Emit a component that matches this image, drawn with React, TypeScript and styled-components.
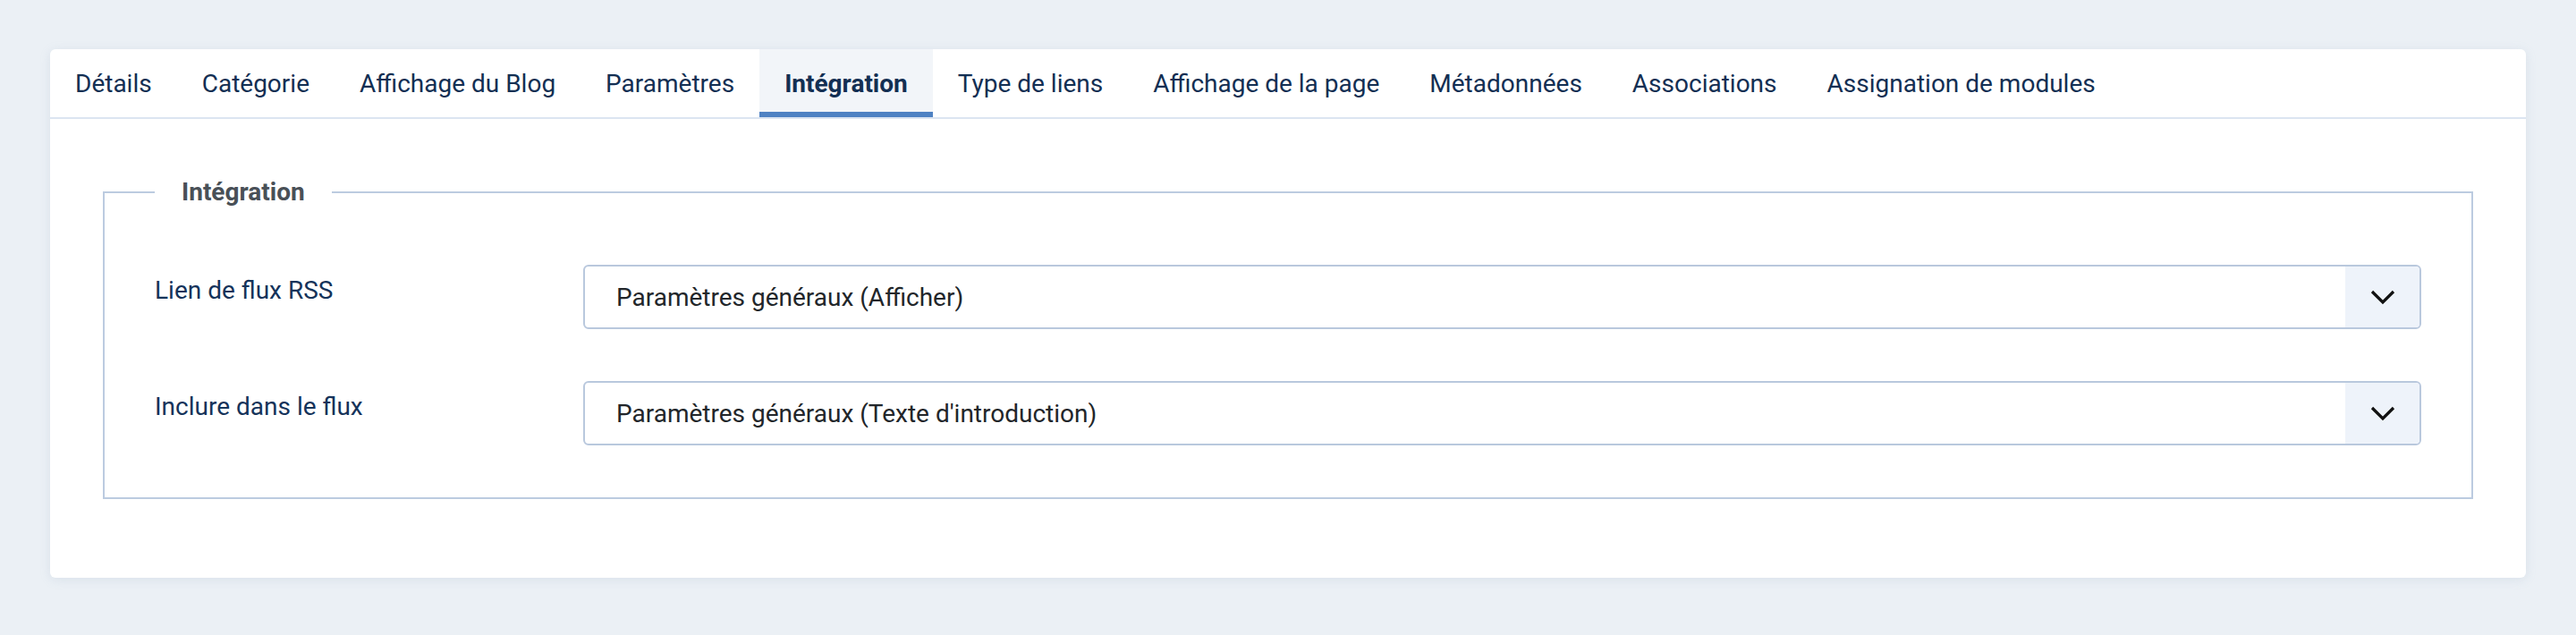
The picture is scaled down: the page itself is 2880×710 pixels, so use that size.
import React from 'react';
import styled, { createGlobalStyle } from 'styled-components';

const GlobalStyle = createGlobalStyle`
  html, body {
    margin: 0;
    padding: 0;
    background: #ebf0f5;
    font-family: Roboto, "Liberation Sans", sans-serif;
  }
`;

const Page = styled.div`
  padding: 55px 56px 66px 56px;
  background: #ebf0f5;
  min-height: 710px;
  box-sizing: border-box;
`;

const Card = styled.div`
  background: #fff;
  border-radius: 6px;
  box-shadow: 0 2px 12px rgba(140, 160, 190, 0.18);
`;

const TabBar = styled.nav`
  display: flex;
  height: 76px;
  border-bottom: 2px solid #dce5f1;
`;

const Tab = styled.div<{ active?: boolean }>`
  display: flex;
  align-items: center;
  padding: 0 28px;
  font-size: 28px;
  color: #132f53;
  font-weight: ${(p) => (p.active ? 700 : 400)};
  background: ${(p) => (p.active ? '#f2f5f9' : 'transparent')};
  box-shadow: ${(p) => (p.active ? 'inset 0 -6px 0 #4f82c3' : 'none')};
  white-space: nowrap;
`;

const Body = styled.div`
  padding: 65px 59px 88px 59px;
`;

const Fieldset = styled.fieldset`
  margin: 0;
  padding: 0 56px 58px 56px;
  border: 2px solid #bccbe0;
  min-width: 0;
`;

const Legend = styled.legend`
  padding: 0 30px;
  font-size: 28px;
  line-height: 34px;
  font-weight: 700;
  color: #495057;
`;

const Rows = styled.div`
  display: flex;
  flex-direction: column;
  gap: 58px;
  padding-top: 64px;
`;

const Row = styled.div`
  display: grid;
  grid-template-columns: 479px 1fr;
  align-items: start;
`;

const Label = styled.label`
  font-size: 28px;
  line-height: 34px;
  color: #15335a;
  padding-top: 12px;
`;

const Select = styled.div`
  display: flex;
  height: 72px;
  box-sizing: border-box;
  border: 2px solid #b9c8dd;
  border-radius: 6px;
  overflow: hidden;
`;

const SelectValue = styled.div`
  flex: 1;
  display: flex;
  align-items: center;
  padding-left: 35px;
  font-size: 28px;
  color: #22262a;
`;

const Caret = styled.div`
  width: 83px;
  display: flex;
  align-items: center;
  justify-content: center;
  background: #eef3fa;
`;

const tabs = [
  'Détails',
  'Catégorie',
  'Affichage du Blog',
  'Paramètres',
  'Intégration',
  'Type de liens',
  'Affichage de la page',
  'Métadonnées',
  'Associations',
  'Assignation de modules',
];

const fields = [
  { label: 'Lien de flux RSS', value: 'Paramètres généraux (Afficher)' },
  { label: 'Inclure dans le flux', value: "Paramètres généraux (Texte d'introduction)" },
];

const Chevron = () => (
  <svg width="28" height="17" viewBox="0 0 28 17">
    <polyline points="2,2 14,14 26,2" fill="none" stroke="#111" strokeWidth="3.2" />
  </svg>
);

export default function App() {
  return (
    <Page>
      <GlobalStyle />
      <Card>
        <TabBar>
          {tabs.map((t) => (
            <Tab key={t} active={t === 'Intégration'}>
              {t}
            </Tab>
          ))}
        </TabBar>
        <Body>
          <Fieldset>
            <Legend>Intégration</Legend>
            <Rows>
              {fields.map((f) => (
                <Row key={f.label}>
                  <Label>{f.label}</Label>
                  <Select>
                    <SelectValue>{f.value}</SelectValue>
                    <Caret>
                      <Chevron />
                    </Caret>
                  </Select>
                </Row>
              ))}
            </Rows>
          </Fieldset>
        </Body>
      </Card>
    </Page>
  );
}
